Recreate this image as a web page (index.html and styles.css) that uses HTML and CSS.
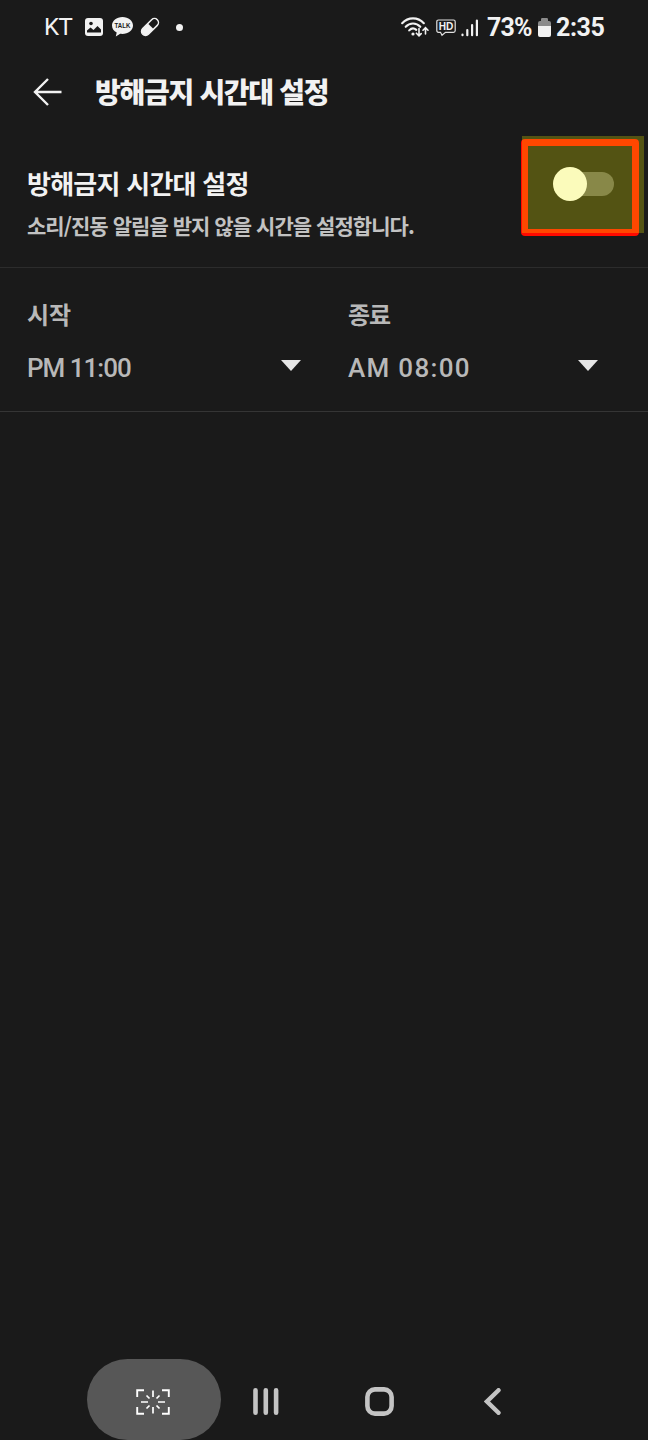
FILE: index.html
```
<!DOCTYPE html>
<html lang="ko">

<head>
    <meta charset="UTF-8">
    <meta name="viewport" content="width=device-width, initial-scale=1.0">
    <title>방해금지 시간대 설정</title>
    <link rel="stylesheet" href="styles.css">
</head>

<body>
    <div class="status-bar">
        <span class="carrier">KT</span>
        <svg class="icon-photo" width="18" height="18" viewBox="0 0 18 18">
            <rect width="18" height="18" rx="3" fill="#f2f2f2"/>
            <circle cx="6" cy="5.5" r="1.8" fill="#1a1a1a"/>
            <path d="M2 14.5 V12.5 L5.5 9.5 L8.5 12 L12.5 8 L16 11.5 V14.5 Z" fill="#1a1a1a"/>
        </svg>
        <svg class="icon-talk" width="21" height="20" viewBox="0 0 21 20">
            <path d="M10.5 0 C4.5 0 0 3.7 0 8.5 C0 11.6 1.9 14.1 4.7 15.6 L3.8 19.5 L8.2 16.8 C15.5 17.6 21 13.8 21 8.5 C21 3.7 16.5 0 10.5 0 Z" fill="#f2f2f2"/>
            <text x="2.6" y="11.4" textLength="15.8" lengthAdjust="spacingAndGlyphs" class="talk-text">TALK</text>
        </svg>
        <svg class="icon-pill" width="20" height="20" viewBox="0 0 20 20">
            <g transform="rotate(-45 10 10)">
                <rect x="-0.3" y="6" width="20.6" height="8" rx="4" fill="none" stroke="#f2f2f2" stroke-width="1.5"/>
                <path d="M11 6 H4 A4 4 0 0 0 4 14 H11 Z" fill="#f2f2f2"/>
            </g>
        </svg>
        <span class="dot"></span>

        <svg class="icon-wifi" width="28" height="20" viewBox="0 0 28 20">
            <g fill="none" stroke="#f2f2f2" stroke-width="2.1" stroke-linecap="round">
                <path d="M1.2 6.2 C7 -0.3 17 -0.3 22.8 6.2"/>
                <path d="M4.7 9.8 C8.7 5.4 15.3 5.4 19.3 9.8"/>
                <path d="M8.2 13.4 C10.4 11 13.2 11 15.3 12.9"/>
                <path d="M18 11.5 V18.5 M15.4 16.2 L18 18.8 L20.2 16.6 M24.5 17 V11 M22 13.2 L24.5 10.7 L27 13.2" stroke-width="1.6"/>
            </g>
            <circle cx="12" cy="17" r="1.6" fill="#f2f2f2"/>
        </svg>
        <svg class="icon-hd" width="20" height="18" viewBox="0 0 20 18">
            <path d="M2.5 1 H17.5 Q19.2 1 19.2 2.7 V11.5 Q19.2 13.3 17.5 13.3 H9.5 L6 16.3 L4.5 13.3 H2.5 Q0.8 13.3 0.8 11.5 V2.7 Q0.8 1 2.5 1 Z" fill="none" stroke="#e0e0e0" stroke-width="1.2"/>
            <text x="2.7" y="11" textLength="14.6" lengthAdjust="spacingAndGlyphs" class="hd-text">HD</text>
        </svg>
        <svg class="icon-signal" width="18" height="18" viewBox="0 0 18 18">
            <path d="M1.5 15.5 V16.2 M6.3 11 V16.2 M11.1 6 V16.2 M15.9 1.5 V16.2" stroke="#f2f2f2" stroke-width="2.2" stroke-linecap="round"/>
        </svg>
        <span class="percent">73%</span>
        <svg class="icon-battery" width="13" height="19" viewBox="0 0 13 19">
            <path d="M2 3 H3 V1.2 Q3 0 4.2 0 H8.8 Q10 0 10 1.2 V3 H11 Q13 3 13 5 V9 H0 V5 Q0 3 2 3 Z" fill="#8b8b8b"/>
            <path d="M0 8 H13 V17 Q13 19 11 19 H2 Q0 19 0 17 Z" fill="#f2f2f2"/>
        </svg>
        <span class="clock">2:35</span>
    </div>

    <div class="header">
        <svg width="30" height="30" viewBox="0 0 30 30">
            <path d="M15 2 L2 15 L15 28 M2 15 H28.5" fill="none" stroke="#f2f2f2" stroke-width="2.4"/>
        </svg>
        <h1>방해금지 시간대 설정</h1>
    </div>

    <div class="setting">
        <div class="setting-text">
            <div class="setting-title">방해금지 시간대 설정</div>
            <div class="setting-desc">소리/진동 알림을 받지 않을 시간을 설정합니다.</div>
        </div>
        <div class="toggle"><div class="thumb"></div></div>
        <div class="mark-frame"></div>
        <div class="mark-fill"></div>
    </div>

    <div class="times">
        <div class="time start">
            <div class="label">시작</div>
            <div class="select">
                <span class="value">PM 11:00</span>
                <span class="arrow"></span>
            </div>
        </div>
        <div class="time end">
            <div class="label">종료</div>
            <div class="select">
                <span class="value">AM 08:00</span>
                <span class="arrow"></span>
            </div>
        </div>
    </div>

    <div class="nav-bar">
        <div class="capture">
            <svg width="34" height="26" viewBox="0 0 34 26">
                <path d="M1.2 8 V1.2 H8 M26 1.2 H32.8 V8 M32.8 18 V24.8 H26 M8 24.8 H1.2 V18" fill="none" stroke="#fff" stroke-width="1.9"/>
                <path d="M17 1.5 V8 M17 18 V24.5 M5 13 H12 M22 13 H29 M10.5 6.5 L13.5 9.5 M23.5 6.5 L20.5 9.5 M10.5 19.5 L13.5 16.5 M23.5 19.5 L20.5 16.5" stroke="#fff" stroke-width="1.7"/>
            </svg>
        </div>
        <svg class="nav-recent" width="26" height="27" viewBox="0 0 26 27">
            <path d="M2.5 2.3 V24.7 M12.8 2.3 V24.7 M23.1 2.3 V24.7" stroke="#c4c4c4" stroke-width="4.6" stroke-linecap="round"/>
        </svg>
        <svg class="nav-home" width="29" height="29" viewBox="0 0 29 29">
            <rect x="2.4" y="2.4" width="24.2" height="24.2" rx="7.5" fill="none" stroke="#c4c4c4" stroke-width="4.6"/>
        </svg>
        <svg class="nav-back" width="17" height="27" viewBox="0 0 17 27">
            <path d="M14.5 2.2 L3 13.5 L14.5 24.8" fill="none" stroke="#c4c4c4" stroke-width="4.4" stroke-linecap="round"/>
        </svg>
    </div>
</body>

</html>
```
FILE: styles.css
```
* {
    box-sizing: border-box;
}

body {
    display: flex;
    flex-direction: column;
    height: 1440px;
    margin: 0;
    overflow: hidden;
    background: #1a1a1a;
    color: #f2f2f2;
    font-family: "Noto Sans CJK KR", sans-serif;
}

svg {
    display: block;
    flex: none;
}

.status-bar {
    display: flex;
    align-items: center;
    height: 54px;
    padding-left: 44px;
    white-space: nowrap;
}

.carrier {
    width: 41px;
    font-family: Roboto, sans-serif;
    font-size: 24px;
    letter-spacing: -0.5px;
}

.icon-talk {
    margin-left: 9px;
}

.talk-text {
    font: bold 7px "Liberation Sans", sans-serif;
    fill: #1a1a1a;
}

.icon-pill {
    margin-left: 7px;
}

.dot {
    width: 7px;
    height: 7px;
    margin-left: 16px;
    border-radius: 50%;
    background: #f2f2f2;
}

.icon-wifi {
    margin-left: 218px;
}

.icon-hd {
    margin: 2px 0 0 7px;
}

.hd-text {
    font: bold 10.5px "Liberation Sans", sans-serif;
    fill: #f2f2f2;
}

.icon-signal {
    margin: 2px 0 0 5px;
}

.percent,
.clock {
    font-family: Roboto, sans-serif;
    font-size: 25px;
    font-weight: 700;
}

.percent {
    width: 51px;
    margin-left: 8px;
    letter-spacing: -0.8px;
}

.clock {
    margin-left: 5px;
    letter-spacing: -0.4px;
}

.header {
    display: flex;
    align-items: center;
    height: 76px;
    padding-left: 33px;
}

.header h1 {
    margin: -2px 0 0 32px;
    font-size: 28px;
    font-weight: 900;
    line-height: 40px;
    letter-spacing: -1.3px;
}

.setting {
    position: relative;
    display: flex;
    justify-content: space-between;
    height: 138px;
    padding: 34px 34px 0 27px;
    border-bottom: 1px solid #2c2c2c;
}

.setting-title {
    font-size: 26px;
    font-weight: 700;
    line-height: 38px;
    letter-spacing: -0.75px;
}

.setting-desc {
    margin-top: 8px;
    color: #c2c2c2;
    font-size: 21px;
    font-weight: 700;
    line-height: 30px;
    letter-spacing: -0.95px;
}

.toggle {
    display: flex;
    align-items: center;
    width: 58px;
    height: 24px;
    margin-top: 8px;
    border-radius: 12px;
    background: #616161;
}

.thumb {
    flex: none;
    width: 34px;
    height: 34px;
    margin-left: -3px;
    border-radius: 50%;
    background: #fafafa;
}

/* highlight drawn over the toggle */
.mark-frame {
    position: absolute;
    top: 9px;
    left: 521px;
    width: 118px;
    height: 97px;
    border: 7px solid #ff0a00;
    border-radius: 4px;
}

.mark-fill {
    position: absolute;
    top: 6px;
    left: 522px;
    width: 122px;
    height: 97px;
    background: rgba(255, 255, 0, 0.25);
}

.times {
    display: flex;
    height: 144px;
    padding: 27px 50px 0 27px;
    border-bottom: 1px solid #353535;
    color: #b8b8b8;
}

.start {
    width: 274px;
    margin-right: 47px;
}

.end {
    flex: 1;
}

.label {
    font-size: 24px;
    font-weight: 700;
    line-height: 38px;
}

.end .label {
    letter-spacing: -1.2px;
}

.select {
    display: flex;
    justify-content: space-between;
    align-items: center;
    height: 36px;
    margin-top: 17px;
}

.value {
    font-family: Roboto, sans-serif;
    font-size: 26px;
    font-weight: 500;
}

.start .value {
    letter-spacing: -1px;
}

.end .value {
    letter-spacing: 1.3px;
}

.arrow {
    margin-bottom: 6px;
    border: 10.5px solid transparent;
    border-top: 11px solid #e6e6e6;
    border-bottom: 0;
}

.nav-bar {
    display: flex;
    align-items: center;
    height: 81px;
    margin-top: auto;
    padding-left: 87px;
}

.capture {
    display: flex;
    justify-content: center;
    align-items: center;
    width: 134px;
    height: 81px;
    padding: 5px 3px 0 0;
    border-radius: 41px;
    background: #575757;
}

.nav-recent {
    margin: 4px 0 0 32px;
}

.nav-home {
    margin: 4px 0 0 86px;
}

.nav-back {
    margin: 4px 0 0 90px;
}
```
